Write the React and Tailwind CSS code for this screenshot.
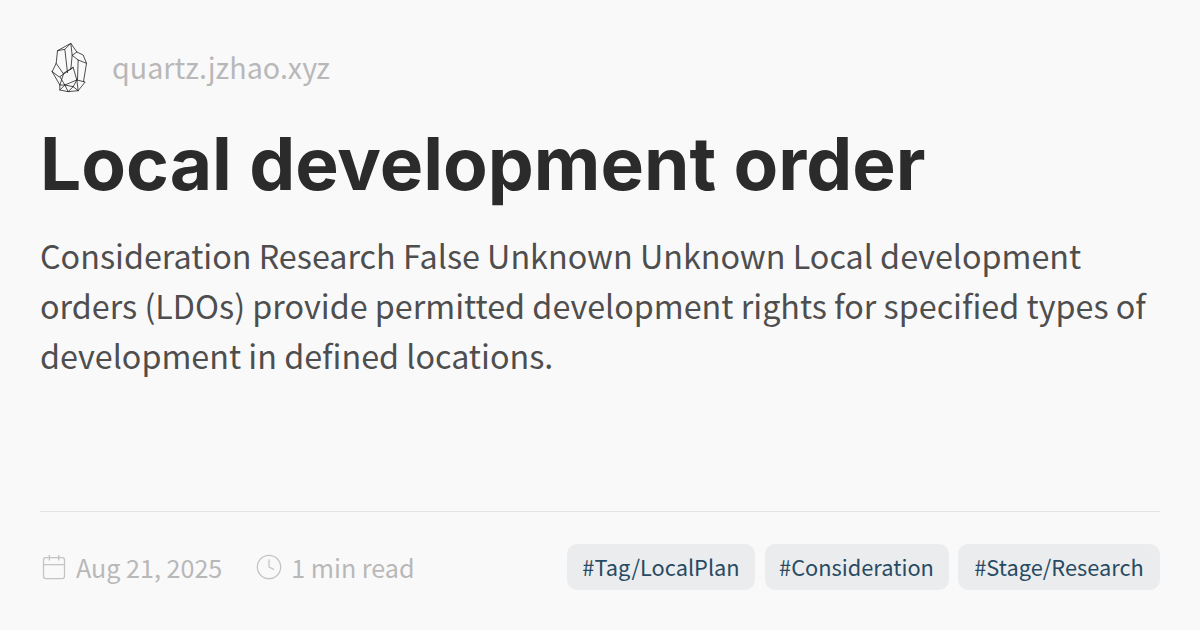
import { Calendar, Clock } from 'lucide-react';

const bodyFont = "font-['Noto_Sans_CJK_JP','Noto_Sans',sans-serif]";

const tags = [
  { label: '#Tag/LocalPlan', width: 'w-[188px]' },
  { label: '#Consideration', width: 'w-[184px]' },
  { label: '#Stage/Research', width: 'w-[202px]' },
];

function CrystalLogo() {
  return (
    <svg viewBox="50 30 125 165" className="w-[42px] h-[55px]" fill="none" stroke="#222222" strokeWidth="2.4" strokeLinejoin="round" strokeLinecap="round">
      {/* back crystals */}
      <path d="M74 100 L78 62 L118 40 L136 66 L155 75 L165 100 L156 155" />
      <path d="M78 62 L100 58 L108 128 M100 58 L118 40 L122 76 L118 118" />
      <path d="M122 76 L136 66 M122 76 L140 90 L165 100 M140 90 L138 150" />
      {/* left and leaning crystals */}
      <path d="M62 125 L74 100 L96 132 L85 165 L62 125 M62 125 L82 140" />
      <path d="M85 140 L125 112 L136 150 L100 165 L85 140 M96 130 L125 112" />
      {/* base */}
      <path d="M85 165 L85 180 L110 185 L140 182 L161 156 L136 150 M85 165 L100 165 L110 185 M100 165 L85 180 M100 165 L125 170 L110 185 M125 170 L140 182 M125 170 L136 150 M140 182 L136 150" />
    </svg>
  );
}

export default function App() {
  return (
    <div className={`w-[1200px] h-[630px] flex flex-col px-10 pt-[38px] pb-10 bg-[#faf9fa] overflow-hidden ${bodyFont}`}>
      <div className="flex items-center gap-[22px] h-[58px] pl-[8px] shrink-0">
        <CrystalLogo />
        <span className="text-[28.7px] leading-none text-[#b8b8b8]">quartz.jzhao.xyz</span>
      </div>

      <h1 className="mt-[23px] text-[73px] leading-[90px] font-bold text-[#2b2b2b] font-['Inter',sans-serif]">
        Local development order
      </h1>

      <p className="mt-[21px] text-[32.3px] leading-[50px] text-[#4e4e4e]">
        Consideration Research False Unknown Unknown Local development orders (LDOs) provide permitted development rights for specified types of development in defined locations.
      </p>

      <div className="mt-auto border-t border-[#e5e5e5] pt-[32px] flex items-center justify-between">
        <div className="flex items-center text-[#b8b8b8] text-[25.1px] leading-none">
          <Calendar className="w-[28px] h-[28px] mr-[8px] text-[#c4c4c4]" strokeWidth={1.1} />
          <span className="relative top-px">Aug 21, 2025</span>
          <Clock className="w-[28px] h-[28px] ml-[33px] mr-[8px] text-[#c4c4c4]" strokeWidth={1.1} />
          <span className="relative top-px">1 min read</span>
        </div>
        <div className="flex items-center gap-[9.5px]">
          {tags.map((tag) => (
            <span key={tag.label} className={`${tag.width} h-[46px] flex items-center justify-center rounded-[10px] bg-[#ebecee] text-[#284b63] text-[21.8px]`}>
              {tag.label}
            </span>
          ))}
        </div>
      </div>
    </div>
  );
}
